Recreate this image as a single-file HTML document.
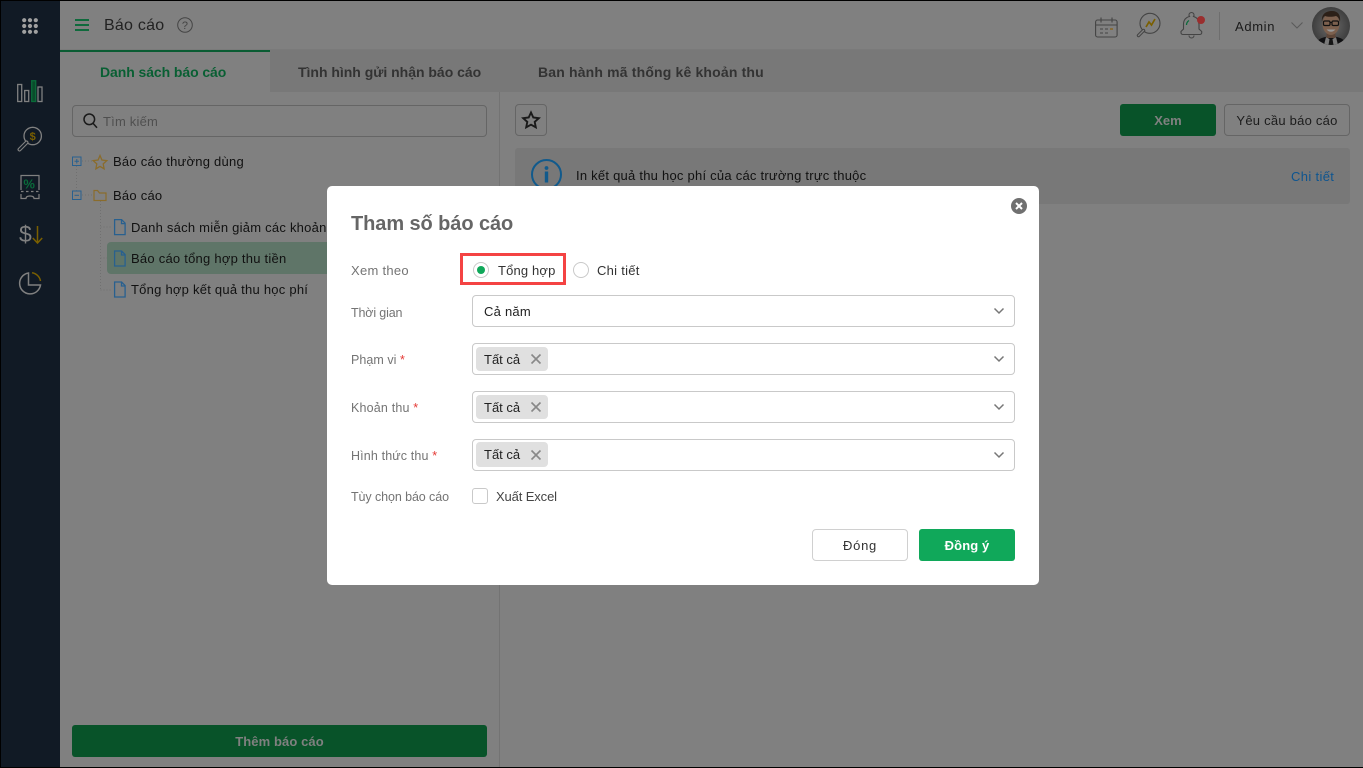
<!DOCTYPE html>
<html lang="vi"><head><meta charset="utf-8"><title>Báo cáo</title>
<style>
*{box-sizing:border-box}
html,body{margin:0;padding:0;width:1363px;height:768px;overflow:hidden;background:#808080;font-family:"Liberation Sans","Noto Sans CJK SC",sans-serif;font-size:13px;color:#111}
.a{position:absolute}
.t{position:absolute;white-space:nowrap;line-height:18px;letter-spacing:.24px;margin-top:1px}
svg{position:absolute;display:block;overflow:visible}
.sel{position:absolute;left:472px;width:543px;height:32px;background:#fff;border:1px solid #c9c9c9;border-radius:4px}
.chip{position:absolute;left:476px;width:72px;height:24px;background:#e0e0e0;border-radius:4px}
.lb{color:#747474;font-size:12.5px}
.req{color:#e53935}
</style></head><body>
<!-- base page, dimmed colours set directly -->
<div class="a" style="left:60px;top:50px;width:1303px;height:42px;background:#787878"></div>
<div class="a" style="left:60px;top:49px;width:1303px;height:1px;background:#7a7a7a"></div>
<div class="a" style="left:60px;top:50px;width:210px;height:42px;background:#808080;border-top:2px solid #0a5c33"></div>
<div class="a" style="left:499px;top:92px;width:1px;height:676px;background:#737373"></div>
<div class="a" style="left:0;top:0;width:60px;height:768px;background:#111a25"></div>

<svg style="left:22px;top:18px" width="16" height="16" fill="#a0a0a0"><circle cx="2.200" cy="2.200" r="2.100"/><circle cx="8" cy="2.200" r="2.100"/><circle cx="13.800" cy="2.200" r="2.100"/><circle cx="2.200" cy="8" r="2.100"/><circle cx="8" cy="8" r="2.100"/><circle cx="13.800" cy="8" r="2.100"/><circle cx="2.200" cy="13.800" r="2.100"/><circle cx="8" cy="13.800" r="2.100"/><circle cx="13.800" cy="13.800" r="2.100"/></svg>
<svg style="left:17px;top:80px" width="27" height="22" fill="none" stroke="#808080" stroke-width="1.300"><rect x=".7" y="4.500" width="4" height="17"/><rect x="7.700" y="10.500" width="4" height="11"/><rect x="14.700" y=".7" width="4" height="20.800" stroke="#0a6b3a" fill="#0a4c2b"/><rect x="21" y="7" width="4" height="14.500"/></svg>
<svg style="left:17px;top:126px" width="26" height="27" fill="none" stroke="#808080" stroke-width="1.300"><circle cx="15.700" cy="10" r="8.700"/><path d="M9.500 16.500 2.500 23.500" stroke-width="4" stroke-linecap="round"/><path d="M9.500 16.500 2.500 23.500" stroke="#111a25" stroke-width="1.700" stroke-linecap="round"/><text x="12.600" y="14" font-size="11" font-weight="700" fill="#7a5f00" stroke="none" font-family="Liberation Sans">$</text></svg>
<svg style="left:20px;top:174px" width="20" height="26" fill="none" stroke="#808080" stroke-width="1.200"><path d="M1 16V1.500h18V16"/><path d="M1 17.500h18" stroke-dasharray="2.500 2.500"/><path d="M1 20v4.500h5c0-2 2-2.500 4-2.500s4 .5 4 2.500h5V20"/><text x="3.400" y="14.500" font-size="13" font-weight="700" fill="#0a6b3a" stroke="none" font-family="Liberation Sans">%</text></svg>
<div class="a" style="left:19px;top:220px;font-size:23px;line-height:28px;color:#808080">$</div>
<svg style="left:32px;top:226px" width="11" height="18" fill="none" stroke="#7a5f00" stroke-width="1.500"><path d="M5.500 0v17M.8 12l4.700 5 4.700-5"/></svg>
<svg style="left:18px;top:271px" width="24" height="24" fill="none" stroke="#808080" stroke-width="1.500"><path d="M10.500 2a10.500 10.500 0 1 0 12 12h-12z"/><path d="M14 1.800A10 10 0 0 1 22.500 10" stroke="#7a5f00"/></svg>

<svg style="left:75px;top:19px" width="14" height="12" stroke="#0f6a3c" stroke-width="2"><path d="M0 1h14M0 6h14M0 11h14"/></svg>
<div class="t" style="left:104px;top:14px;font-size:16px;line-height:22px;color:#222">Báo cáo</div>
<svg style="left:177px;top:17px" width="16" height="16" fill="none" stroke="#444"><circle cx="8" cy="8" r="7.300"/><text x="4.900" y="12" font-size="11" fill="#444" stroke="none" font-family="Liberation Sans">?</text></svg>

<svg style="left:1095px;top:17px" width="23" height="21" fill="none" stroke="#444" stroke-width="1.100"><rect x=".6" y="3" width="21.500" height="17" rx="2"/><path d="M.6 8h21.500M6 .5v5M17 .5v5M5 12h3M10 12h3M5 16h3M10 16h3"/><path d="M15 12h3" stroke="#8a5c00"/></svg>
<svg style="left:1137px;top:13px" width="25" height="25" fill="none" stroke="#444" stroke-width="1.100"><circle cx="13" cy="10.300" r="10"/><path d="M6.500 17.500 1.500 22.500" stroke-width="3.400" stroke-linecap="round"/><path d="M6.500 17.500 1.500 22.500" stroke="#808080" stroke-width="1.300" stroke-linecap="round"/><path d="M9 14l3-5 2.500 3L18 6" stroke="#7a5f00" stroke-width="1.700"/></svg>
<svg style="left:1180px;top:13px" width="26" height="26" fill="none" stroke="#444" stroke-width="1.100"><path d="M9.500 3.500a2.500 2.500 0 1 1 4 0c4 1 5.500 4 5.500 8v4.500l2.700 2.500v1.500a2 2 0 0 1-2 1.500H3a2 2 0 0 1-2-1.500V18.500L3.500 16v-4.500c0-4 2-7 6-8zM9 22.500a2.500 2.500 0 0 0 5 0"/><path d="M6.500 12c0-2 1-3.500 2.500-4.500" stroke="#0a6b3a" stroke-width="1.300"/><circle cx="21" cy="7" r="4" fill="#9a2e2e" stroke="none"/></svg>
<div class="a" style="left:1219px;top:12px;width:1px;height:28px;background:#6e6e6e"></div>
<div class="t" style="left:1235px;top:17px;color:#1a1a1a;letter-spacing:.65px">Admin</div>
<svg style="left:1291px;top:22px" width="12" height="7" fill="none" stroke="#5a5a5a" stroke-width="1.100"><path d="M.5.500 6 6l5.500-5.500"/></svg>
<svg style="left:1312px;top:7px" width="38" height="38" viewBox="0 0 38 38"><defs><clipPath id="c"><circle cx="19" cy="19" r="19"/></clipPath><radialGradient id="g"><stop offset="0" stop-color="#6a6a6a"/><stop offset="1" stop-color="#3e3e3e"/></radialGradient></defs><g clip-path="url(#c)"><rect width="38" height="38" fill="url(#g)"/><path d="M4 38c1-7 8-8 15-9 7 1 14 2 15 9z" fill="#101012"/><path d="M14 30l5 3 5-3 2 8H12z" fill="#7a7a7a"/><path d="M17.500 32h3l1 6h-5z" fill="#151515"/><rect x="14.500" y="23" width="9" height="8" fill="#5e4638"/><ellipse cx="19" cy="17" rx="8.500" ry="11" fill="#7c604e"/><path d="M10 15C9 7 14 4 20 4s9 4 8 11c-1-4-2-5-4-6-4 1-8 1-11 0-1.500 1-2.500 2-3 6z" fill="#2c2018"/><rect x="11.500" y="14" width="6.500" height="4.500" rx="1.300" fill="none" stroke="#111" stroke-width="1.200"/><rect x="20" y="14" width="6.500" height="4.500" rx="1.300" fill="none" stroke="#111" stroke-width="1.200"/><path d="M18 15.500h2" stroke="#111"/><path d="M14.500 22.500c3 3 6 3 9 0z" fill="#989898"/></g></svg>

<div class="t" style="left:100px;top:62px;font-size:14px;font-weight:700;color:#095f33;letter-spacing:-.08px">Danh sách báo cáo</div>
<div class="t" style="left:298px;top:62px;font-size:14px;font-weight:700;color:#333;letter-spacing:-.015px">Tình hình gửi nhận báo cáo</div>
<div class="t" style="left:538px;top:62px;font-size:14px;font-weight:700;color:#333;letter-spacing:.165px">Ban hành mã thống kê khoản thu</div>

<div class="a" style="left:72px;top:105px;width:415px;height:32px;border:1px solid #656565;border-radius:4px;background:#808080"></div>
<svg style="left:83px;top:113px" width="15" height="16" fill="none" stroke="#1a1a1a" stroke-width="1.500"><circle cx="6.300" cy="6.300" r="5.300"/><path d="M10 10.300 14 14.800"/></svg>
<div class="t" style="left:103px;top:112px;color:#4f4f4f;letter-spacing:.2px">Tìm kiếm</div>

<svg style="left:72px;top:155px" width="50" height="140" fill="none">
<path d="M4.500 11v28M10 6h10M10 40h10M28.500 46v89M28.500 72h10M28.500 103h10M28.500 135h10" stroke="#707070" stroke-dasharray="1 2"/>
<rect x=".5" y="2" width="8.500" height="8.500" stroke="#28608f" fill="#808080"/><path d="M2.500 6.300h4.500M4.800 4v4.500" stroke="#28608f"/>
<rect x=".5" y="36" width="8.500" height="8.500" stroke="#28608f" fill="#808080"/><path d="M2.500 40.300h4.500" stroke="#28608f"/>
<path d="M28 .5l1.900 4.500 4.900.6-3.600 3.300.9 4.900-4.100-2.400-4.100 2.400.9-4.900-3.600-3.300 4.900-.6z" stroke="#8a6c2c" stroke-width="1.300"/>
<path d="M22 35.500v10h12v-7.500h-6.500l-2-2.500z" stroke="#8a6c2c" stroke-width="1.200"/>
</svg>
<div class="t" style="left:113px;top:152px">Báo cáo thường dùng</div>
<div class="t" style="left:113px;top:186px">Báo cáo</div>
<div class="a" style="left:107px;top:242px;width:240px;height:32px;background:#5f7568;border-radius:4px 0 0 4px"></div>
<svg style="left:114px;top:219px" width="12" height="80" fill="none" stroke="#28608f" stroke-width="1.300"><path d="M.6.600h7l3.500 3.500v11.500H.6zM7.500.600v4h3.600"/><path d="M.6 32h7l3.500 3.500v11.500H.6zM7.500 32v4h3.600"/><path d="M.6 63h7l3.500 3.500v11.500H.6zM7.500 63v4h3.600"/></svg>
<div class="t" style="left:131px;top:218px">Danh sách miễn giảm các khoản thu</div>
<div class="t" style="left:131px;top:249px">Báo cáo tổng hợp thu tiền</div>
<div class="t" style="left:131px;top:280px">Tổng hợp kết quả thu học phí</div>

<div class="a" style="left:72px;top:725px;width:415px;height:32px;background:#085329;border-radius:3px"></div>
<div class="t" style="left:72px;top:732px;width:415px;text-align:center;color:#808080;font-weight:700;letter-spacing:.1px">Thêm báo cáo</div>

<div class="a" style="left:515px;top:104px;width:32px;height:32px;border:1px solid #656565;border-radius:4px"></div>
<svg style="left:522px;top:111px" width="18" height="18" fill="none" stroke="#1a1a1a" stroke-width="1.900"><path d="M9 1.500l2.300 5 5.500.7-4.100 3.700 1.100 5.400L9 13.700l-4.800 2.600 1.100-5.400L1.200 7.200l5.500-.7z"/></svg>
<div class="a" style="left:1120px;top:104px;width:96px;height:32px;background:#085329;border-radius:3px"></div>
<div class="t" style="left:1120px;top:111px;width:96px;text-align:center;color:#808080;font-weight:700;letter-spacing:0">Xem</div>
<div class="a" style="left:1224px;top:104px;width:126px;height:32px;border:1px solid #656565;border-radius:4px"></div>
<div class="t" style="left:1224px;top:111px;width:126px;text-align:center;color:#1c1c1c">Yêu cầu báo cáo</div>
<div class="a" style="left:515px;top:148px;width:835px;height:56px;background:#787878;border-radius:3px"></div>
<svg style="left:531px;top:159px" width="32" height="32"><circle cx="15.500" cy="15.500" r="14.500" fill="none" stroke="#115a8c" stroke-width="2"/><circle cx="15.500" cy="9" r="1.900" fill="#115a8c"/><rect x="13.800" y="12.500" width="3.400" height="11" fill="#115a8c"/></svg>
<div class="t" style="left:576px;top:166px">In kết quả thu học phí của các trường trực thuộc</div>
<div class="t" style="left:1291px;top:167px;color:#0e5590;letter-spacing:.35px">Chi tiết</div>

<div class="a" style="left:0;top:0;width:1363px;height:1px;background:#000"></div>
<div class="a" style="left:0;top:767px;width:1363px;height:1px;background:#000"></div>
<div class="a" style="left:0;top:0;width:1px;height:768px;background:#000"></div>

<!-- modal -->
<div class="a" style="left:327px;top:186px;width:712px;height:399px;background:#fff;border-radius:5px"></div>
<svg style="left:1011px;top:198px" width="16" height="16"><circle cx="8" cy="8" r="8" fill="#707070"/><path d="M5 5l6 6M11 5l-6 6" stroke="#fff" stroke-width="2"/></svg>
<div class="t" style="left:351px;top:211px;margin-top:0;font-size:20px;line-height:26px;font-weight:700;color:#666;letter-spacing:-.08px">Tham số báo cáo</div>

<div class="t lb" style="left:351px;top:261px;font-size:13px;letter-spacing:.28px">Xem theo</div>
<div class="a" style="left:460px;top:253px;width:106px;height:32px;border:3px solid #f44343"></div>
<svg style="left:473px;top:262px" width="16" height="16"><circle cx="8" cy="8" r="7.500" fill="#fff" stroke="#c9c9c9"/><circle cx="8" cy="8" r="4" fill="#10a85a"/></svg>
<div class="t" style="left:498px;top:261px;color:#333;letter-spacing:.16px">Tổng hợp</div>
<svg style="left:573px;top:262px" width="16" height="16"><circle cx="8" cy="8" r="7.500" fill="#fff" stroke="#c9c9c9"/></svg>
<div class="t" style="left:597px;top:261px;color:#333;letter-spacing:.28px">Chi tiết</div>

<div class="t lb" style="left:351px;top:303px;letter-spacing:-.15px">Thời gian</div>
<div class="sel" style="top:295px"></div>
<div class="t" style="left:484px;top:302px;color:#222">Cả năm</div>

<div class="t lb" style="left:351px;top:350px;letter-spacing:.05px">Phạm vi <span class="req">*</span></div>
<div class="sel" style="top:343px"></div>
<div class="chip" style="top:347px"></div>
<div class="t" style="left:484px;top:350px;color:#222;letter-spacing:0">Tất cả</div>

<div class="t lb" style="left:351px;top:398px;letter-spacing:.18px">Khoản thu <span class="req">*</span></div>
<div class="sel" style="top:391px"></div>
<div class="chip" style="top:395px"></div>
<div class="t" style="left:484px;top:398px;color:#222;letter-spacing:0">Tất cả</div>

<div class="t lb" style="left:351px;top:446px;letter-spacing:.14px">Hình thức thu <span class="req">*</span></div>
<div class="sel" style="top:439px"></div>
<div class="chip" style="top:442px;height:25px"></div>
<div class="t" style="left:484px;top:445px;color:#222;letter-spacing:0">Tất cả</div>

<svg style="left:531px;top:354px" width="10" height="10" stroke="#888" stroke-width="1.600"><path d="M.5.500l9 9M9.500.500l-9 9"/></svg>
<svg style="left:531px;top:402px" width="10" height="10" stroke="#888" stroke-width="1.600"><path d="M.5.500l9 9M9.500.500l-9 9"/></svg>
<svg style="left:531px;top:450px" width="10" height="10" stroke="#888" stroke-width="1.600"><path d="M.5.500l9 9M9.500.500l-9 9"/></svg>

<svg style="left:994px;top:308px" width="10" height="6" fill="none" stroke="#777" stroke-width="1.500"><path d="M.5.500 5 5 9.500.5"/></svg>
<svg style="left:994px;top:356px" width="10" height="6" fill="none" stroke="#777" stroke-width="1.500"><path d="M.5.500 5 5 9.500.5"/></svg>
<svg style="left:994px;top:404px" width="10" height="6" fill="none" stroke="#777" stroke-width="1.500"><path d="M.5.500 5 5 9.500.5"/></svg>
<svg style="left:994px;top:452px" width="10" height="6" fill="none" stroke="#777" stroke-width="1.500"><path d="M.5.500 5 5 9.500.5"/></svg>

<div class="t lb" style="left:351px;top:487px;letter-spacing:-.09px">Tùy chọn báo cáo</div>
<div class="a" style="left:472px;top:488px;width:16px;height:16px;border:1px solid #c9c9c9;border-radius:3px;background:#fff"></div>
<div class="t" style="left:496px;top:487px;color:#444;letter-spacing:-.12px">Xuất Excel</div>

<div class="a" style="left:812px;top:529px;width:96px;height:32px;border:1px solid #d0d0d0;border-radius:4px;background:#fff"></div>
<div class="t" style="left:812px;top:536px;width:96px;text-align:center;color:#333;letter-spacing:.7px">Đóng</div>
<div class="a" style="left:919px;top:529px;width:96px;height:32px;background:#10a85a;border-radius:3px"></div>
<div class="t" style="left:919px;top:536px;width:96px;text-align:center;color:#fff;font-weight:700;letter-spacing:.1px">Đồng ý</div>
</body></html>
